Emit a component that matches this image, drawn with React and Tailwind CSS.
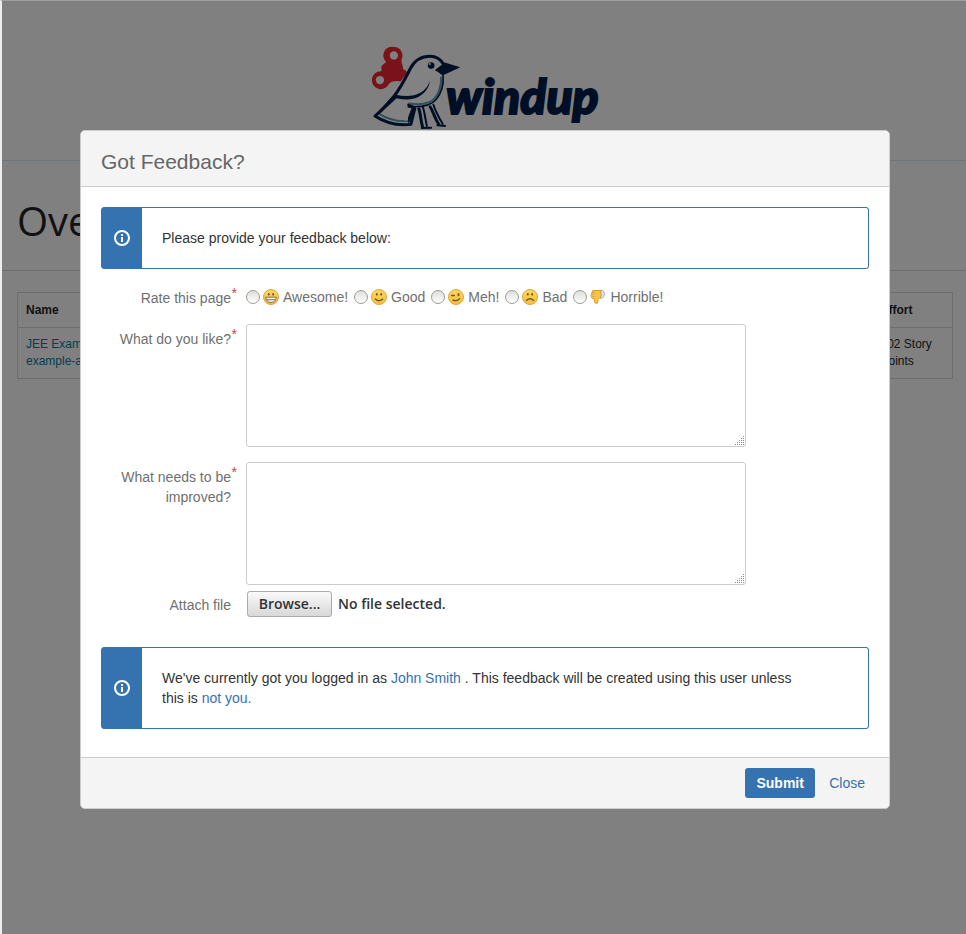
import { useId } from 'react';

const NAVY = '#000f26';

function Bird() {
  return (
    <svg viewBox="24 24 280 260" className="block h-[87px] w-[93px]" aria-hidden="true">
      <path
        fill="#7a1219"
        fillRule="evenodd"
        d="M99 32a26 26 0 0 1 23 38c1 5-1 8 1 12 2 5 3 10 4 16 3 3 8 4 10 7l2 16-8 15c-8 3-12-1-18-1-12-1-24 0-30 10a27 27 0 1 1-22-40c3-6-2-9 1-15 3-7 9-8 14-13A26 26 0 0 1 99 32zm0 13a12 12 0 1 0 0 25 12 12 0 0 0 0-25zM57 119a12 12 0 1 0 0 25 12 12 0 0 0 0-25z"
      />
      <path fill="#828282" d="M41 240L149 96C164 68 184 60 208 58c22 0 32 8 42 25l-4 34c2 26-3 52-21 74-10 12-30 22-65 22l-12 50c-30 10-72 2-107-23z" />
      <g fill="none" stroke="#31505f" strokeWidth="6" strokeLinecap="round">
        <path d="M241 124c1 32-12 64-36 74-18 7-38 8-60 4M56 234c28 17 60 24 90 20" />
      </g>
      <g fill="none" stroke={NAVY} strokeLinejoin="round" strokeLinecap="round">
        <path strokeWidth="9" d="M104 183L42 240c30 20 66 30 108 25l12-48" />
        <path strokeWidth="9" d="M60 224c14-16 24-26 38-42 16-20 36-56 51-86 15-28 35-36 59-36 20 0 31 8 40 24" />
        <path strokeWidth="5" d="M247 118c2 26-4 52-21 72-10 12-30 22-66 22l-18-7" />
        <path strokeWidth="9" d="M174 218c4 8 5 30 11 54M208 212c8 12 14 34 26 53" />
        <path strokeWidth="6" d="M186 212c4 10 8 36 12 58M218 206c5 16 16 38 28 58M183 276l28-1M230 268l23 2" />
      </g>
      <path fill={NAVY} d="M104 176c46 10 88 2 104-42-6 38-40 58-72 56-14 0-26-2-36-6zM222 102l30-23 47 14-52 24c-8-2-12-10-25-15zM140 203l24 8-8 28-14 25z" />
      <path fill="#828282" d="M132 214l20 2-14 38-40-6z" />
      <circle cx="211" cy="88" r="10" fill={NAVY} />
      <circle cx="207" cy="83" r="3" fill="#8a8a8a" />
    </svg>
  );
}

function Face({ kind }) {
  const id = useId();
  return (
    <svg viewBox="0 0 16 16" className="block size-4" aria-hidden="true">
      <defs>
        <linearGradient id={id} x1="0" y1="0" x2="0" y2="1">
          <stop offset="0" stopColor="#ffd95a" />
          <stop offset="1" stopColor="#f9bd3a" />
        </linearGradient>
      </defs>
      <circle cx="8" cy="8" r="7.5" fill={`url(#${id})`} stroke="#dba63c" />
      {kind !== 'wink' && (
        <g fill="#6b5a36">
          <ellipse cx="5.8" cy="5.3" rx=".9" ry="1.4" />
          <ellipse cx="10.2" cy="5.3" rx=".9" ry="1.4" />
        </g>
      )}
      {kind === 'grin' && (
        <path d="M2.7 8.2h10.6c0 3-2 5.200-5.3 5.200S2.700 11.200 2.700 8.200zM3.500 10.700h9" fill="#fff" stroke="#7b6b4a" />
      )}
      {kind === 'smile' && <path d="M4 9.700c1.800 2.700 6.200 2.700 8 0" fill="none" stroke="#6b5a36" strokeWidth="1.400" />}
      {kind === 'wink' && (
        <g fill="none" stroke="#6b5a36" strokeWidth="1.400">
          <path d="M3 6.500h4M4.500 10.800c2.500 1.500 6 1 7.500-1.800" />
          <path d="M10.500 4.200v3" strokeWidth="1.800" />
        </g>
      )}
      {kind === 'sad' && <path d="M4 12c1.800-3 6.200-3 8 0" fill="none" stroke="#6b5a36" strokeWidth="1.400" />}
    </svg>
  );
}

function ThumbDown() {
  return (
    <svg viewBox="0 0 16 16" className="block size-4" aria-hidden="true">
      <path d="M10.500 1.500h2c2.500 1.500 2.500 5 .3 7l-2.300 1z" fill="#e4e4e4" stroke="#a5a5a5" />
      <path d="M2.800 1.500h7.700l.8 5.500-3.300 3.500v3c-1.300 1.500-3 .8-3.500-.5L4.200 9.500H2.500C1 8.500.8 6.500 1.300 5.500z" fill="#fbc544" stroke="#d99a35" />
      <path d="M1.500 5.500h3M2 3.500h3M2.200 7.500h2.500" stroke="#e0a63c" />
    </svg>
  );
}

const ratings = [
  { label: 'Awesome!', icon: <Face kind="grin" /> },
  { label: 'Good', icon: <Face kind="smile" /> },
  { label: 'Meh!', icon: <Face kind="wink" /> },
  { label: 'Bad', icon: <Face kind="sad" /> },
  { label: 'Horrible!', icon: <ThumbDown /> },
];

function Info({ children }) {
  return (
    <div className="flex rounded-[3px] border border-[#3572b0] bg-[#3572b0]">
      <div className="flex w-10 shrink-0 items-center justify-center">
        <svg viewBox="0 0 16 16" className="size-4" aria-hidden="true">
          <circle cx="8" cy="8" r="7" fill="none" stroke="#fff" strokeWidth="2" />
          <path d="M7 4h2v2H7zM7 7h2v5H7z" fill="#fff" />
        </svg>
      </div>
      <p className="grow rounded-r-[2px] bg-white py-5 pr-16 pl-5 text-[#333]">{children}</p>
    </div>
  );
}

function Required() {
  return <span className="absolute -top-[5px] -right-1.5 text-[#d04437]">*</span>;
}

function Grip() {
  return (
    <svg viewBox="0 0 10 10" className="pointer-events-none absolute right-px bottom-px size-2.5" aria-hidden="true">
      <path
        d="M8 .5h1M6 2.500h1M8 2.500h1M6 4.500h1M8 4.500h1M4 4.500h1M4 6.500h1M6 6.500h1M8 6.500h1M2 6.500h1M0 8.500h1M2 8.500h1M4 8.500h1M6 8.500h1M8 8.500h1"
        stroke="#8c8c8c"
      />
    </svg>
  );
}

function Question({ id, children }) {
  return (
    <div className="flex items-start gap-[15px]">
      <label htmlFor={id} className="relative mt-[5px] w-[130px] shrink-0 text-right text-[#707070]">
        {children}
        <Required />
      </label>
      <div className="relative w-[500px]">
        <textarea id={id} className="block h-[123px] w-full resize-none rounded-[3px] border border-[#ccc] bg-white p-1" />
        <Grip />
      </div>
    </div>
  );
}

export default function App() {
  return (
    <div className="relative min-h-screen border-t border-l-2 border-t-[#a0a0a0] border-l-[#eee] bg-[#808080] font-['Liberation_Sans',Arial,sans-serif] text-sm leading-5">
      <header className="flex h-40 justify-center border-b border-[#6d747c] pt-[43px]">
        <div className="flex items-start">
          <Bird />
          <span className="-ml-4 pt-[26px] font-['Lato',sans-serif] text-[48px] leading-[52px] font-black text-[#000f26] italic [-webkit-text-stroke:2px_#000f26]">
            windup
          </span>
        </div>
      </header>
      <main>
        <div className="border-b border-[#6e6e6e] px-[15px] pt-11 pb-[33px]">
          <h1 className="font-['Open_Sans',sans-serif] text-[40px] leading-8 text-[#111]">Overview</h1>
        </div>
        <div className="pt-[21px] pr-[13px] pl-[15px]">
          <table className="w-full border-collapse border border-[#6d6d6d] text-left text-xs leading-[17px] text-[#111]">
            <thead>
              <tr className="border-b border-[#6d6d6d]">
                <th className="px-2 pt-[9px] pb-2">Name</th>
                <th className="w-[72px] pt-[9px] pb-2">Effort</th>
              </tr>
            </thead>
            <tbody>
              <tr>
                <td className="p-2">
                  <a href="#app" className="text-[#003f4f]">JEE Example App<br />example-app.ear</a>
                </td>
                <td className="py-2">102 Story<br />Points</td>
              </tr>
            </tbody>
          </table>
        </div>
      </main>

      <div className="absolute inset-0 flex items-start justify-center pt-[129px] pl-0.5">
        <form
          role="dialog"
          aria-labelledby="title"
          className="w-[810px] max-w-full overflow-hidden rounded-[5px] border border-[#ccc] bg-white"
          onSubmit={(e) => e.preventDefault()}
        >
          <div className="border-b border-[#ccc] bg-[#f4f4f4] px-5 pt-4 pb-[9px]">
            <h2 id="title" className="text-[21px] leading-[30px] text-[#666]">Got Feedback?</h2>
          </div>
          <div className="px-5 pt-5 pb-7">
            <Info>Please provide your feedback below:</Info>
            <div role="radiogroup" aria-labelledby="rate" className="mt-[17px] flex items-start gap-[15px]">
              <span id="rate" className="relative mt-0.5 w-[130px] shrink-0 text-right text-[#707070]">
                Rate this page
                <Required />
              </span>
              <div className="flex gap-1.5 pt-px">
                {ratings.map((r) => (
                  <label key={r.label} className="flex items-center text-[#707070]">
                    <input
                      type="radio"
                      name="rating"
                      className="size-3.5 appearance-none rounded-full border border-[#9a9d98] bg-linear-to-b from-[#dededb] to-white checked:bg-[#666]"
                    />
                    <span className="ml-[3px]">{r.icon}</span>
                    <span className="ml-1">{r.label}</span>
                  </label>
                ))}
              </div>
            </div>
            <div className="mt-4 flex flex-col gap-[15px]">
              <Question id="like">What do you like?</Question>
              <Question id="improve">What needs to be improved?</Question>
            </div>
            <div className="mt-1.5 flex items-center gap-4">
              <label htmlFor="file" className="w-[130px] shrink-0 pt-0.5 text-right text-[#707070]">Attach file</label>
              <div className="flex items-center gap-1.5 font-['Open_Sans',sans-serif] font-semibold text-[#333]">
                <button
                  id="file"
                  type="button"
                  className="h-[26px] w-[85px] rounded-[3px] border border-[#aaa] bg-linear-to-b from-[#fafafa] to-[#d8d8d8]"
                >
                  Browse...
                </button>
                <span>No file selected.</span>
              </div>
            </div>
            <div className="mt-[30px]">
              <Info>
                We've currently got you logged in as <a href="#user" className="text-[#3572b0]">John Smith</a> . This
                feedback will be created using this user unless this is <a href="#login" className="text-[#3572b0]">not you.</a>
              </Info>
            </div>
          </div>
          <div className="flex items-center justify-end gap-3.5 border-t border-[#ccc] bg-[#f4f4f4] py-2.5 pr-6 pl-5">
            <button type="submit" className="h-[30px] w-[70px] rounded-[3px] bg-[#3572b0] font-bold text-white">Submit</button>
            <button type="button" className="text-[#3572b0]">Close</button>
          </div>
        </form>
      </div>
    </div>
  );
}
